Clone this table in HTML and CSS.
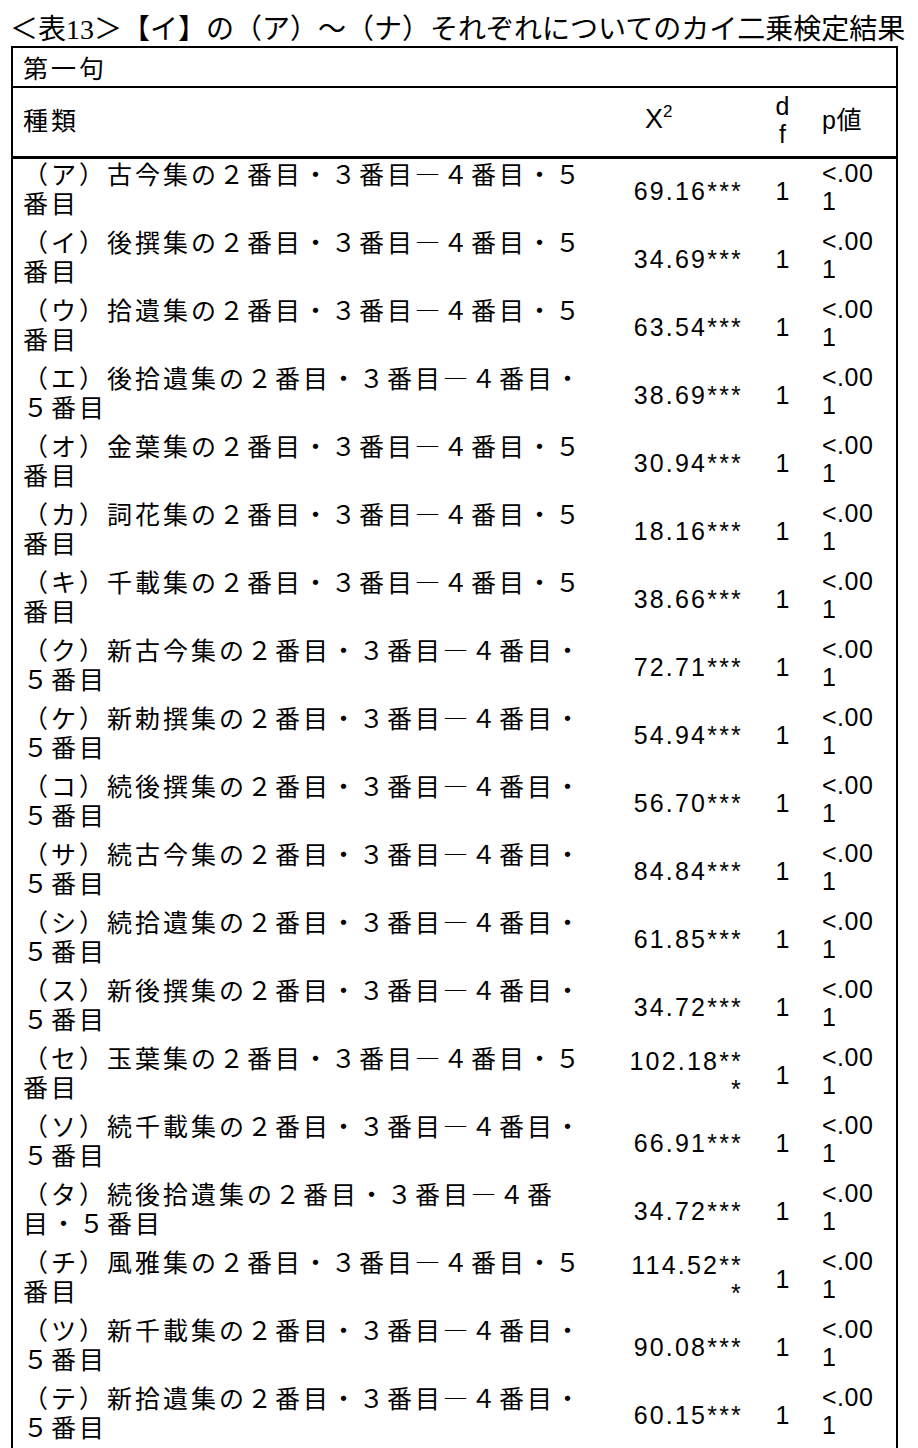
FILE: index.html
```html
<!DOCTYPE html>
<html lang="ja">
<head>
<meta charset="utf-8">
<title>表13</title>
<link rel="stylesheet" href="styles.css">
</head>
<body>
<div class="title">＜表<span class="num">13</span>＞【イ】の（ア）～（ナ）それぞれについてのカイ二乗検定結果</div>
<div class="sheet">
  <div class="caption-row">第一句</div>
  <div class="row head">
    <div class="c1 jp">種類</div>
    <div class="c2h">Χ<sup>2</sup></div>
    <div class="c3">d<br>f</div>
    <div class="c4">p<span class="jp0">値</span></div>
  </div>

  <div class="row"><div class="c1">（ア）古今集の２番目・３番目―４番目・５<br>番目</div><div class="c2">69.16***</div><div class="c3">1</div><div class="c4">&lt;.00<br>1</div></div>
  <div class="row"><div class="c1">（イ）後撰集の２番目・３番目―４番目・５<br>番目</div><div class="c2">34.69***</div><div class="c3">1</div><div class="c4">&lt;.00<br>1</div></div>
  <div class="row"><div class="c1">（ウ）拾遺集の２番目・３番目―４番目・５<br>番目</div><div class="c2">63.54***</div><div class="c3">1</div><div class="c4">&lt;.00<br>1</div></div>
  <div class="row"><div class="c1">（エ）後拾遺集の２番目・３番目―４番目・<br>５番目</div><div class="c2">38.69***</div><div class="c3">1</div><div class="c4">&lt;.00<br>1</div></div>
  <div class="row"><div class="c1">（オ）金葉集の２番目・３番目―４番目・５<br>番目</div><div class="c2">30.94***</div><div class="c3">1</div><div class="c4">&lt;.00<br>1</div></div>
  <div class="row"><div class="c1">（カ）詞花集の２番目・３番目―４番目・５<br>番目</div><div class="c2">18.16***</div><div class="c3">1</div><div class="c4">&lt;.00<br>1</div></div>
  <div class="row"><div class="c1">（キ）千載集の２番目・３番目―４番目・５<br>番目</div><div class="c2">38.66***</div><div class="c3">1</div><div class="c4">&lt;.00<br>1</div></div>
  <div class="row"><div class="c1">（ク）新古今集の２番目・３番目―４番目・<br>５番目</div><div class="c2">72.71***</div><div class="c3">1</div><div class="c4">&lt;.00<br>1</div></div>
  <div class="row"><div class="c1">（ケ）新勅撰集の２番目・３番目―４番目・<br>５番目</div><div class="c2">54.94***</div><div class="c3">1</div><div class="c4">&lt;.00<br>1</div></div>
  <div class="row"><div class="c1">（コ）続後撰集の２番目・３番目―４番目・<br>５番目</div><div class="c2">56.70***</div><div class="c3">1</div><div class="c4">&lt;.00<br>1</div></div>
  <div class="row"><div class="c1">（サ）続古今集の２番目・３番目―４番目・<br>５番目</div><div class="c2">84.84***</div><div class="c3">1</div><div class="c4">&lt;.00<br>1</div></div>
  <div class="row"><div class="c1">（シ）続拾遺集の２番目・３番目―４番目・<br>５番目</div><div class="c2">61.85***</div><div class="c3">1</div><div class="c4">&lt;.00<br>1</div></div>
  <div class="row"><div class="c1">（ス）新後撰集の２番目・３番目―４番目・<br>５番目</div><div class="c2">34.72***</div><div class="c3">1</div><div class="c4">&lt;.00<br>1</div></div>
  <div class="row"><div class="c1">（セ）玉葉集の２番目・３番目―４番目・５<br>番目</div><div class="c2">102.18**<br>*</div><div class="c3">1</div><div class="c4">&lt;.00<br>1</div></div>
  <div class="row"><div class="c1">（ソ）続千載集の２番目・３番目―４番目・<br>５番目</div><div class="c2">66.91***</div><div class="c3">1</div><div class="c4">&lt;.00<br>1</div></div>
  <div class="row"><div class="c1">（タ）続後拾遺集の２番目・３番目―４番<br>目・５番目</div><div class="c2">34.72***</div><div class="c3">1</div><div class="c4">&lt;.00<br>1</div></div>
  <div class="row"><div class="c1">（チ）風雅集の２番目・３番目―４番目・５<br>番目</div><div class="c2">114.52**<br>*</div><div class="c3">1</div><div class="c4">&lt;.00<br>1</div></div>
  <div class="row"><div class="c1">（ツ）新千載集の２番目・３番目―４番目・<br>５番目</div><div class="c2">90.08***</div><div class="c3">1</div><div class="c4">&lt;.00<br>1</div></div>
  <div class="row"><div class="c1">（テ）新拾遺集の２番目・３番目―４番目・<br>５番目</div><div class="c2">60.15***</div><div class="c3">1</div><div class="c4">&lt;.00<br>1</div></div>
</div>
</body>
</html>
```

FILE: styles.css
```css
html, body {
  margin: 0;
  padding: 0;
  background: #fff;
  color: #000;
}

.title {
  height: 46px;
  box-sizing: border-box;
  padding: 8px 0 0 10px;
  font-family: "Noto Sans CJK JP", sans-serif;
  font-size: 28px;
  line-height: 38px;
  white-space: nowrap;
}

.title .num {
  font-family: "Liberation Serif", serif;
}

.sheet {
  margin-left: 11px;
  width: 887px;
  box-sizing: border-box;
  border: 2px solid #000;
  border-bottom: 0;
}

.caption-row {
  height: 38px;
  border-bottom: 2px solid #000;
  padding-left: 10px;
  display: flex;
  align-items: center;
  font-family: "Noto Sans CJK JP", sans-serif;
  font-size: 25px;
  line-height: 29px;
  letter-spacing: 3px;
}

.row {
  display: grid;
  grid-template-columns: 602px 140px 55px 86px;
  height: 68px;
  font-family: "Liberation Sans", "Noto Sans CJK JP", sans-serif;
  font-size: 25px;
  line-height: 28px;
  letter-spacing: 2.2px;
}

.row.head {
  border-bottom: 3px solid #000;
  align-items: center;
}

.head .c1 {
  padding-bottom: 5px;
}

.c1 {
  padding-left: 10px;
  font-family: "Noto Sans CJK JP", sans-serif;
  font-size: 25px;
  line-height: 29px;
  letter-spacing: 3px;
  white-space: nowrap;
}

.c2 {
  align-self: center;
  text-align: right;
  padding-right: 12px;
  padding-bottom: 4px;
  white-space: nowrap;
}

.c2h {
  padding-left: 30px;
  padding-bottom: 6px;
  font-size: 27px;
  letter-spacing: 0;
}

.c2h sup {
  font-size: 17px;
  line-height: 0;
  vertical-align: 11px;
}

.c3 {
  align-self: center;
  text-align: center;
  letter-spacing: 0;
  padding-bottom: 4px;
}

.c4 {
  padding-left: 12px;
  white-space: nowrap;
  letter-spacing: 0.5px;
}

.head .c4 {
  padding-bottom: 6px;
}

.jp0 {
  font-family: "Noto Sans CJK JP", sans-serif;
  font-size: 25px;
  letter-spacing: 0;
}
```
